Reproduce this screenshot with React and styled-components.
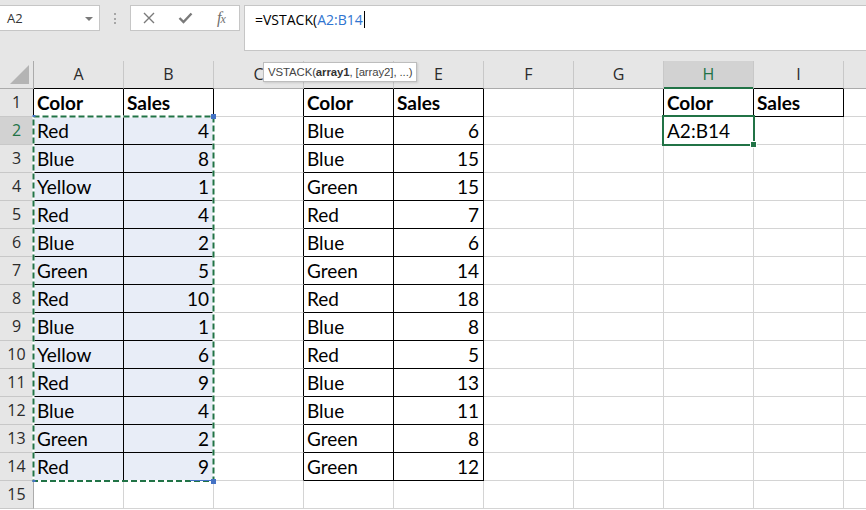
import React from 'react';
import styled, { createGlobalStyle } from 'styled-components';

const GREEN = '#217346';
const GRID = '#d4d4d4';
const HEAD_LINE = '#ababab';
const HEAD_SEP = '#c8c8c8';
const BLACK = '#000';
const SEL_FILL = '#e8edf7';
const BLUE = '#4472c4';

const Global = createGlobalStyle`
  html, body { margin: 0; padding: 0; background: #fff; overflow: hidden; }
  #root { width: 866px; height: 510px; }
`;

const Page = styled.div`
  width: 866px;
  height: 510px;
  overflow: hidden;
  background: #fff;
  display: flex;
  flex-direction: column;
`;

const Toolbar = styled.div`
  display: flex;
  align-items: flex-start;
  height: 61px;
  flex: none;
  box-sizing: border-box;
  padding-top: 5px;
  background: #e6e6e6;
`;

const NameBox = styled.div`
  width: 101px;
  height: 26px;
  margin-left: -1px;
  box-sizing: border-box;
  border: 1px solid #c6c6c6;
  background: #fff;
  display: flex;
  align-items: center;
  justify-content: space-between;
  padding: 0 6px 0 7px;
  font-family: 'Open Sans', sans-serif;
  font-size: 13px;
  color: #333;
`;

const DropArrow = styled.span`
  width: 0;
  height: 0;
  border-left: 4px solid transparent;
  border-right: 4px solid transparent;
  border-top: 4px solid #7a7a7a;
  margin-top: 1px;
`;

const Grip = styled.div`
  display: flex;
  flex-direction: column;
  gap: 2.5px;
  margin: 8px 14px 0 14px;
`;

const GripDot = styled.span`
  width: 2px;
  height: 2px;
  background: #a6a6a6;
`;

const ButtonGroup = styled.div`
  width: 110px;
  height: 26px;
  box-sizing: border-box;
  border: 1px solid #c6c6c6;
  background: #fff;
  display: flex;
  align-items: center;
`;

const IconSlot = styled.span`
  width: 36px;
  display: flex;
  align-items: center;
  justify-content: center;
  color: #7a7a7a;
`;

const Fx = styled.span`
  font-family: 'Liberation Serif', serif;
  font-style: italic;
  font-size: 16px;
  color: #6f6f6f;
  letter-spacing: -1px;
  small { font-size: 12px; }
`;

const FormulaBar = styled.div`
  flex: 1;
  height: 46px;
  margin-left: 4px;
  margin-right: -2px;
  box-sizing: border-box;
  border: 1px solid #c6c6c6;
  background: #fff;
  padding: 4px 10px;
  font-family: 'Open Sans', sans-serif;
  font-size: 14px;
  line-height: 19px;
  color: #000;
  white-space: nowrap;
`;

const RefText = styled.span`
  color: #2f74d0;
`;

const Caret = styled.span`
  display: inline-block;
  width: 1px;
  height: 17px;
  background: #000;
  vertical-align: -3px;
  margin-left: 1px;
`;

const Sheet = styled.div`
  position: relative;
  flex: 1;
  overflow: hidden;
`;

const Grid = styled.div`
  display: grid;
  grid-template-columns: 34px repeat(10, 90px);
  grid-auto-rows: 28px;
  width: 934px;
`;

const Corner = styled.div`
  background: #e6e6e6;
  box-sizing: border-box;
  border-right: 1px solid ${HEAD_LINE};
  border-bottom: 1px solid ${HEAD_LINE};
  display: flex;
  align-items: flex-end;
  justify-content: flex-end;
  padding: 0 3px 3px 0;
`;

const HeadBase = styled.div`
  box-sizing: border-box;
  font-family: 'Open Sans', sans-serif;
  font-size: 16px;
  line-height: 27px;
  text-align: center;
  white-space: nowrap;
  overflow: hidden;
  background: ${p => (p.$active ? '#d2d2d2' : '#e6e6e6')};
  color: ${p => (p.$active ? GREEN : '#2b2b2b')};
  border-right: 1px solid ${p => p.$r};
  border-bottom: 1px solid ${p => p.$b};
`;

const ColHead = styled(HeadBase)`
  box-shadow: ${p => (p.$active ? `inset 0 -1px 0 ${GREEN}` : 'none')};
`;

const RowHead = styled(HeadBase)``;

const Cell = styled.div`
  box-sizing: border-box;
  font-family: Lato, 'Liberation Sans', sans-serif;
  font-size: 19px;
  line-height: 27px;
  padding: 0 4px 0 3px;
  white-space: nowrap;
  overflow: hidden;
  color: #000;
  font-weight: ${p => (p.$bold ? 700 : 400)};
  text-align: ${p => (p.$num ? 'right' : 'left')};
  background: ${p => (p.$fill ? SEL_FILL : '#fff')};
  border-right: 1px solid ${p => p.$r};
  border-bottom: 1px solid ${p => p.$b};
`;

const Tooltip = styled.div`
  position: absolute;
  left: 263px;
  top: 1px;
  height: 20px;
  box-sizing: border-box;
  padding: 0 4px 0 4px;
  border: 1px solid #bdbdbd;
  background: #fff;
  box-shadow: 1px 1px 2px rgba(0, 0, 0, 0.12);
  font-family: 'Liberation Sans', sans-serif;
  font-size: 11.4px;
  letter-spacing: -0.1px;
  line-height: 18px;
  color: #444;
  white-space: nowrap;
  b { font-weight: 700; color: #333; }
`;

const Ants = styled.svg`
  position: absolute;
  left: 32px;
  top: 54px;
  overflow: visible;
`;

const ActiveCell = styled.div`
  position: absolute;
  left: 662px;
  top: 54px;
  width: 93px;
  height: 31px;
  box-sizing: border-box;
  border: 2px solid ${GREEN};
`;

const FillHandle = styled.span`
  position: absolute;
  right: -4px;
  bottom: -4px;
  width: 5px;
  height: 5px;
  background: ${GREEN};
  border: 1px solid #fff;
`;

const COLS = ['A', 'B', 'C', 'D', 'E', 'F', 'G', 'H', 'I', ''];

const tableA = [
  ['Red', 4], ['Blue', 8], ['Yellow', 1], ['Red', 4], ['Blue', 2], ['Green', 5], ['Red', 10],
  ['Blue', 1], ['Yellow', 6], ['Red', 9], ['Blue', 4], ['Green', 2], ['Red', 9],
];
const tableD = [
  ['Blue', 6], ['Blue', 15], ['Green', 15], ['Red', 7], ['Blue', 6], ['Green', 14], ['Red', 18],
  ['Blue', 8], ['Red', 5], ['Blue', 13], ['Blue', 11], ['Green', 8], ['Green', 12],
];

function value(r, c) {
  if (r === 1 && (c === 1 || c === 4 || c === 8)) return 'Color';
  if (r === 1 && (c === 2 || c === 5 || c === 9)) return 'Sales';
  if (r >= 2 && r <= 14) {
    if (c === 1 || c === 2) return tableA[r - 2][c - 1];
    if (c === 4 || c === 5) return tableD[r - 2][c - 4];
    if (c === 8 && r === 2) return 'A2:B14';
  }
  return '';
}

function bordered(r, c) {
  if (r >= 1 && r <= 14 && (c === 1 || c === 2 || c === 4 || c === 5)) return true;
  if (r === 1 && (c === 8 || c === 9)) return true;
  return false;
}

const ROWS = 15;

function renderCell(r, c) {
  const key = `${r}-${c}`;
  if (r === 0 && c === 0) {
    return (
      <Corner key={key}>
        <svg width="20" height="20" viewBox="0 0 20 20">
          <polygon points="0,19 19,19 19,0" fill="#b4b4b4" />
        </svg>
      </Corner>
    );
  }
  if (r === 0) {
    const active = c === 8;
    const b = active ? GREEN : bordered(1, c) ? BLACK : HEAD_LINE;
    return (
      <ColHead key={key} $active={active} $r={HEAD_SEP} $b={b}>
        {COLS[c - 1]}
      </ColHead>
    );
  }
  if (c === 0) {
    const r2 = bordered(r, 1) ? BLACK : HEAD_LINE;
    return (
      <RowHead key={key} $active={r === 2} $r={r2} $b={HEAD_SEP}>
        {r}
      </RowHead>
    );
  }
  const v = value(r, c);
  const right = bordered(r, c) || bordered(r, c + 1) ? BLACK : GRID;
  const bottom = bordered(r, c) || bordered(r + 1, c) ? BLACK : GRID;
  return (
    <Cell
      key={key}
      $r={right}
      $b={bottom}
      $bold={r === 1}
      $num={typeof v === 'number'}
      $fill={r >= 2 && r <= 14 && (c === 1 || c === 2)}
    >
      {v}
    </Cell>
  );
}

export default function App() {
  const cells = [];
  for (let r = 0; r <= ROWS; r++) {
    for (let c = 0; c <= 10; c++) cells.push(renderCell(r, c));
  }
  return (
    <Page>
      <Global />
      <Toolbar>
        <NameBox>
          <span>A2</span>
          <DropArrow />
        </NameBox>
        <Grip>
          <GripDot />
          <GripDot />
          <GripDot />
        </Grip>
        <ButtonGroup>
          <IconSlot>
            <svg width="12" height="12" viewBox="0 0 12 12">
              <path d="M1 1 L11 11 M11 1 L1 11" stroke="#7a7a7a" strokeWidth="1.4" fill="none" />
            </svg>
          </IconSlot>
          <IconSlot>
            <svg width="15" height="12" viewBox="0 0 15 12">
              <path d="M1.5 6 L5.5 10 L13.5 1.5" stroke="#7a7a7a" strokeWidth="2.4" fill="none" />
            </svg>
          </IconSlot>
          <IconSlot>
            <Fx>
              f<small>x</small>
            </Fx>
          </IconSlot>
        </ButtonGroup>
        <FormulaBar>
          =VSTACK(<RefText>A2:B14</RefText>
          <Caret />
        </FormulaBar>
      </Toolbar>
      <Sheet>
        <Grid>{cells}</Grid>
        <Ants width="183" height="368">
          <rect x="1.5" y="1.5" width="180" height="364.5" fill="none" stroke="#fff" strokeWidth="2" />
          <rect
            x="1.5"
            y="1.5"
            width="180"
            height="364.5"
            fill="none"
            stroke={GREEN}
            strokeWidth="2"
            strokeDasharray="6 3"
          />
          <rect x="0.5" y="0" width="3" height="2" fill={BLUE} />
          <rect x="179" y="-1" width="5" height="5" fill={BLUE} />
          <rect x="0.5" y="365" width="3" height="2" fill={BLUE} />
          <rect x="158" y="365" width="22" height="1" fill={BLUE} />
          <rect x="179" y="364" width="5" height="5" fill={BLUE} />
        </Ants>
        <ActiveCell>
          <FillHandle />
        </ActiveCell>
        <Tooltip>
          VSTACK(<b>array1</b>, [array2], ...)
        </Tooltip>
      </Sheet>
    </Page>
  );
}
